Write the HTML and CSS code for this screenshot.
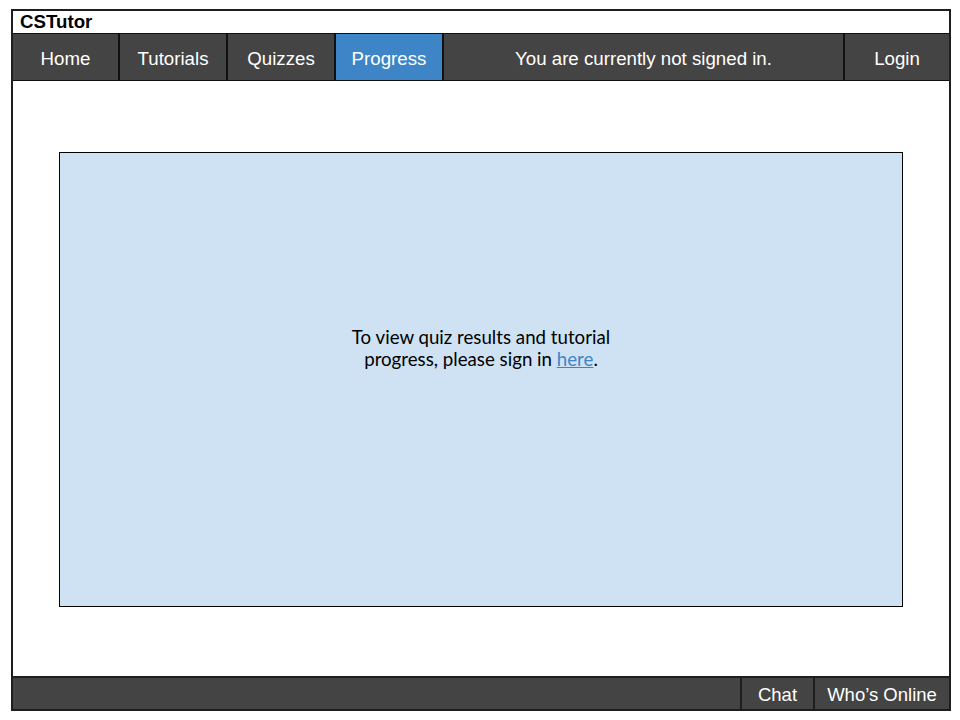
FILE: index.html
```html
<!DOCTYPE html>
<html>
<head>
<meta charset="utf-8">
<link rel="stylesheet" href="styles.css">
</head>
<body>
<div class="frame">
  <div class="title">CSTutor</div>
  <nav class="nav">
    <div class="item home">Home</div>
    <div class="item w108">Tutorials</div>
    <div class="item w108">Quizzes</div>
    <div class="item w108 active">Progress</div>
    <div class="item status">You are currently not signed in.</div>
    <div class="item login">Login</div>
  </nav>
  <main class="main">
    <div class="panel">
      <p class="msg">To view quiz results and tutorial progress, please sign in <a href="#">here</a>.</p>
    </div>
  </main>
  <footer class="footer">
    <div class="spacer"></div>
    <div class="fitem chat">Chat</div>
    <div class="fitem online">Who’s Online</div>
  </footer>
</div>
</body>
</html>
```
FILE: styles.css
```css
html, body { margin: 0; padding: 0; background: #fff; }
body { font-family: "Liberation Sans", Arial, sans-serif; }
.frame {
  margin: 9px 0 0 11px;
  width: 940px;
  height: 702px;
  box-sizing: border-box;
  border: 2px solid #1e1e1e;
  display: flex;
  flex-direction: column;
}
.title {
  height: 22px;
  box-sizing: border-box;
  padding: 0 0 0 7px;
  font-weight: bold;
  font-size: 18.7px;
  line-height: 22px;
  color: #000;
}
.nav {
  display: flex;
  height: 48px;
  background: #444;
}
.item {
  box-sizing: border-box;
  border: 1px solid #111;
  background: #444;
  color: #fff;
  font-size: 18.7px;
  display: flex;
  align-items: center;
  justify-content: center;
  padding-top: 3px;
}
.home { width: 106px; border-left: none; }
.w108 { width: 108px; }
.active { background: #3d85c6; }
.status { width: 401px; }
.login { flex: 1; border-right: none; }
.main {
  flex: 1;
  padding: 71px 46px 69px 46px;
  display: flex;
}
.panel {
  flex: 1;
  background: #cfe2f3;
  border: 1px solid #000;
  display: flex;
  align-items: center;
  justify-content: center;
}
.msg {
  margin: 0 0 64px 0;
  width: 290px;
  text-align: center;
  font-family: Lato, sans-serif;
  font-size: 18.7px;
  line-height: 22px;
  color: #000;
}
.msg a { color: #3d85c6; text-decoration: underline; }
.footer {
  height: 33px;
  box-sizing: border-box;
  display: flex;
  background: #444;
  border-top: 2px solid #1e1e1e;
}
.spacer { flex: 1; }
.fitem {
  box-sizing: border-box;
  color: #fff;
  font-size: 18.5px;
  display: flex;
  align-items: center;
  justify-content: center;
  border-left: 2px solid #1e1e1e;
  padding-top: 2px;
}
.chat { width: 73px; }
.online { width: 136px; }
```
